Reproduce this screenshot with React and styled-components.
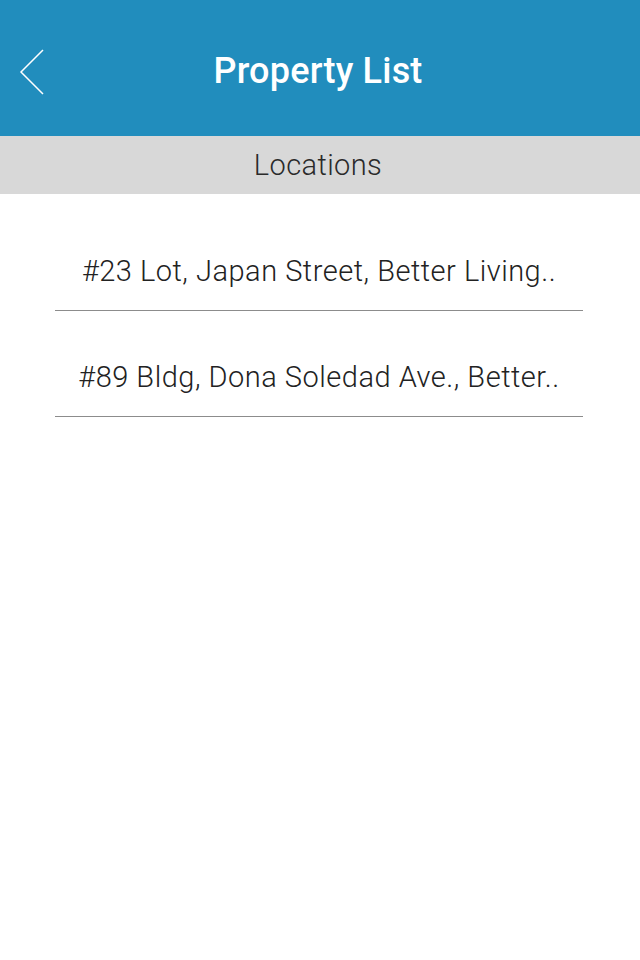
import React from 'react'
import styled, { createGlobalStyle } from 'styled-components'

const GlobalStyle = createGlobalStyle`
  body {
    margin: 0;
    background: #fff;
    font-family: Roboto, "Liberation Sans", sans-serif;
  }
`

const StPage = styled.div`
  width: 640px;
  min-height: 960px;
  background: #fff;
`

const StHeader = styled.header`
  position: relative;
  height: 136px;
  background-color: #218dbd;
  display: flex;
  align-items: center;
  justify-content: center;
`

const StBack = styled.button`
  position: absolute;
  left: 14px;
  top: 44px;
  width: 40px;
  height: 56px;
  padding: 0;
  border: none;
  background: none;
  cursor: pointer;
`

const StTitle = styled.h1`
  margin: 0 4px 0 0;
  padding-top: 5px;
  color: #fff;
  font-size: 36px;
  font-weight: 500;
  line-height: 1;
  letter-spacing: 0.2px;
`

const StSection = styled.div`
  height: 58px;
  background-color: #d8d8d8;
  display: flex;
  align-items: center;
  justify-content: center;
  padding-right: 4px;
  color: #2a2a2a;
  font-size: 29px;
  font-weight: 300;
  letter-spacing: 0.4px;
`

const StList = styled.ul`
  list-style: none;
  margin: 0;
  padding: 11px 57px 0 55px;
`

const StItem = styled.li`
  height: 106px;
  box-sizing: border-box;
  display: flex;
  align-items: center;
  justify-content: center;
  padding-top: 26px;
  border-bottom: 1px solid #8c8c8c;
  color: #222;
  font-size: 29px;
  font-weight: 300;
  letter-spacing: 0.5px;
  white-space: nowrap;
`

const locations = [
  '#23 Lot, Japan Street, Better Living..',
  '#89 Bldg, Dona Soledad Ave., Better..',
]

function App() {
  return (
    <StPage>
      <GlobalStyle />
      <StHeader>
        <StBack aria-label="back">
          <svg width="40" height="56" viewBox="0 0 40 56">
            <polyline points="29,6 7,28 29,50" fill="none" stroke="#fff" strokeWidth="1.5" />
          </svg>
        </StBack>
        <StTitle>Property List</StTitle>
      </StHeader>
      <StSection>Locations</StSection>
      <StList>
        {locations.map((loc) => (
          <StItem key={loc}>{loc}</StItem>
        ))}
      </StList>
    </StPage>
  )
}

export default App
